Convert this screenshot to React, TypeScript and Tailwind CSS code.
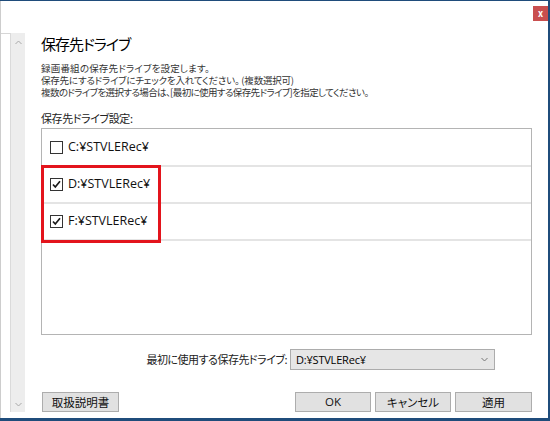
import React from "react"

const drives = [
  { path: "C:¥STVLERec¥", checked: false },
  { path: "D:¥STVLERec¥", checked: true },
  { path: "F:¥STVLERec¥", checked: true },
]

function CheckBox({ checked }: { checked: boolean }) {
  return (
    <span className="flex h-[13px] w-[13px] shrink-0 items-center justify-center border border-[#333333] bg-white">
      {checked && (
        <svg width="11" height="11" viewBox="0 0 11 11">
          <path d="M2 5.5 L4.3 8 L9 2.3" fill="none" stroke="#1a1a1a" strokeWidth="1.7" />
        </svg>
      )}
    </span>
  )
}

function Chevron({ up = false, color = "#a8a8a8" }: { up?: boolean; color?: string }) {
  return (
    <svg width="7" height="5" viewBox="0 0 7 5">
      <path d={up ? "M0.5 4 L3.5 1 L6.5 4" : "M0.5 1 L3.5 4 L6.5 1"} fill="none" stroke={color} strokeWidth="1" />
    </svg>
  )
}

function WinButton({ label, className = "" }: { label: string; className?: string }) {
  return (
    <button className={`h-[20px] border border-[#adadad] bg-[#e1e1e1] text-[11.5px] leading-[18px] text-[#111] ${className}`}>
      {label}
    </button>
  )
}

export default function App() {
  return (
    <div className="flex h-[421px] w-[550px] flex-col border-t border-r-2 border-b-[3px] border-[#1f4c7b] bg-white font-['Noto_Sans_CJK_JP',sans-serif] text-black [font-feature-settings:'palt']">
      {/* title bar */}
      <div className="flex h-[32px] items-start justify-end border-l border-[#cdcdcd] pt-[5px]">
        <button className="flex h-[15px] w-[15px] items-center justify-center bg-[#c94f4f] text-[9px] font-bold leading-none text-white">
          x
        </button>
      </div>

      <div className="flex min-h-0 flex-1">
        {/* left scroll strip */}
        <div className="flex w-[25px] border-l border-[#cdcdcd]">
          <div className="w-[9px] border-t border-[#d6d6d6]" />
          <div className="flex h-[379px] w-[15px] flex-col items-center justify-between border-l border-[#dadada] bg-[#ededed] pt-[7px] pb-[5px]">
            <Chevron up />
            <Chevron />
          </div>
        </div>

        {/* page */}
        <div className="flex flex-1 flex-col px-[16px]">
          <h1 className="mt-[1px] text-[15px] leading-[20px] tracking-[-1px]">保存先ドライブ</h1>

          <div className="mt-[8px] text-[9.5px] leading-[12px] whitespace-nowrap text-[#333]">
            <p className="tracking-[0.2px]">録画番組の保存先ドライブを設定します。</p>
            <p className="tracking-[-0.2px]">保存先にするドライブにチェックを入れてください。 (複数選択可)</p>
            <p className="tracking-[-0.6px]">複数のドライブを選択する場合は、[最初に使用する保存先ドライブ]を指定してください。</p>
          </div>

          <p className="mt-[13px] text-[11px] leading-[14px] tracking-[-0.4px] text-[#222]">保存先ドライブ設定:</p>

          <div className="relative mt-[3px] h-[207px] border border-[#b4b4b4] pt-[1px]">
            {drives.map((d) => (
              <div
                key={d.path}
                className="flex h-[37px] items-center gap-[5px] border-b-2 border-[#e4e4e4] pl-[8px]"
              >
                <CheckBox checked={d.checked} />
                <span className="font-['Open_Sans',sans-serif] text-[12.5px] leading-none text-[#111]">{d.path}</span>
              </div>
            ))}
            {/* highlight */}
            <div className="absolute top-[36px] left-[-1px] h-[78px] w-[120px] border-[3px] border-[#e3141c]" />
          </div>

          <div className="mt-[14px] flex h-[21px] items-center justify-end gap-[3px] pr-[37px]">
            <span className="text-[11px] leading-none tracking-[-0.5px] text-[#222]">最初に使用する保存先ドライブ:</span>
            <div className="flex h-[21px] w-[205px] items-center justify-between border border-[#acacac] bg-[#e6e6e6] pr-[6px] pl-[5px]">
              <span className="font-['Open_Sans',sans-serif] text-[11px] leading-none tracking-[-0.2px]">D:¥STVLERec¥</span>
              <Chevron color="#777" />
            </div>
          </div>

          <div className="mt-[22px] flex items-center justify-between">
            <WinButton label="取扱説明書" className="ml-[1px] w-[77px]" />
            <div className="flex gap-[4px]">
              <WinButton label="OK" className="w-[76px] font-['Open_Sans',sans-serif]" />
              <WinButton label="キャンセル" className="w-[76px]" />
              <WinButton label="適用" className="w-[77px]" />
            </div>
          </div>
        </div>
      </div>
    </div>
  )
}
